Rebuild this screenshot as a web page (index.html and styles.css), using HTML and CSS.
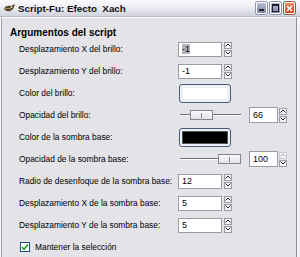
FILE: index.html
```html
<!DOCTYPE html>
<html lang="es">
<head>
    <meta charset="UTF-8">
    <title>Script-Fu: Efecto Xach</title>
    <link rel="stylesheet" href="styles.css">
</head>
<body>
    <div class="window">
        <!-- barra de título -->
        <div class="titlebar">
            <svg class="app-icon" width="13" height="10" viewBox="0 0 13 10">
                <path d="M1 6 C2 3 5 2 8 3 L12 1 L11 4 C10 7 7 9 4 8 C3 8 2 7 1 6 Z" fill="#4d4426"/>
                <path d="M2 6 C4 5 6 5 8 6" stroke="#b5a46a" stroke-width="1" fill="none"/>
                <circle cx="8.5" cy="4.2" r="0.9" fill="#e8e0c0"/>
            </svg>
            <span class="title">Script-Fu: Efecto  Xach</span>
            <div class="win-buttons">
                <span class="win-btn"><i class="glyph-min"></i></span>
                <span class="win-btn"><i class="glyph-max"></i></span>
                <span class="win-btn close">
                    <svg width="7" height="7" viewBox="0 0 7 7"><path d="M1 1 L6 6 M6 1 L1 6" stroke="#fff" stroke-width="1.6"/></svg>
                </span>
            </div>
        </div>

        <div class="client">
            <div class="frame">
                <div class="frame-title">Argumentos del script</div>

                <div class="args">
                    <label>Desplazamiento X del brillo:</label>
                    <div class="spin">
                        <div class="entry"><span class="sel">-1</span></div>
                        <div class="arrows">
                            <span class="arrow"><svg width="6" height="4" viewBox="0 0 6 4"><path d="M0.5 3.5 L3 1 L5.5 3.5" stroke="#222" fill="none"/></svg></span>
                            <span class="arrow"><svg width="6" height="4" viewBox="0 0 6 4"><path d="M0.5 0.5 L3 3 L5.5 0.5" stroke="#222" fill="none"/></svg></span>
                        </div>
                    </div>

                    <label>Desplazamiento Y del brillo:</label>
                    <div class="spin">
                        <div class="entry">-1</div>
                        <div class="arrows">
                            <span class="arrow"><svg width="6" height="4" viewBox="0 0 6 4"><path d="M0.5 3.5 L3 1 L5.5 3.5" stroke="#222" fill="none"/></svg></span>
                            <span class="arrow"><svg width="6" height="4" viewBox="0 0 6 4"><path d="M0.5 0.5 L3 3 L5.5 0.5" stroke="#222" fill="none"/></svg></span>
                        </div>
                    </div>

                    <label>Color del brillo:</label>
                    <div class="color-btn"><div class="swatch white"></div></div>

                    <label>Opacidad del brillo:</label>
                    <div class="scale-row">
                        <div class="scale">
                            <div class="track"></div>
                            <div class="thumb" style="left: 10px"></div>
                        </div>
                        <div class="spin">
                            <div class="entry small">66</div>
                            <div class="arrows">
                                <span class="arrow"><svg width="6" height="4" viewBox="0 0 6 4"><path d="M0.5 3.5 L3 1 L5.5 3.5" stroke="#222" fill="none"/></svg></span>
                                <span class="arrow"><svg width="6" height="4" viewBox="0 0 6 4"><path d="M0.5 0.5 L3 3 L5.5 0.5" stroke="#222" fill="none"/></svg></span>
                            </div>
                        </div>
                    </div>

                    <label>Color de la sombra base:</label>
                    <div class="color-btn"><div class="swatch black"></div></div>

                    <label>Opacidad de la sombra base:</label>
                    <div class="scale-row">
                        <div class="scale">
                            <div class="track"></div>
                            <div class="thumb" style="left: 38px"></div>
                        </div>
                        <div class="spin">
                            <div class="entry small">100</div>
                            <div class="arrows">
                                <span class="arrow off"><svg width="6" height="4" viewBox="0 0 6 4"><path d="M0.5 3.5 L3 1 L5.5 3.5" stroke="#aaa" fill="none"/></svg></span>
                                <span class="arrow"><svg width="6" height="4" viewBox="0 0 6 4"><path d="M0.5 0.5 L3 3 L5.5 0.5" stroke="#222" fill="none"/></svg></span>
                            </div>
                        </div>
                    </div>

                    <label>Radio de desenfoque de la sombra base:</label>
                    <div class="spin">
                        <div class="entry">12</div>
                        <div class="arrows">
                            <span class="arrow"><svg width="6" height="4" viewBox="0 0 6 4"><path d="M0.5 3.5 L3 1 L5.5 3.5" stroke="#222" fill="none"/></svg></span>
                            <span class="arrow"><svg width="6" height="4" viewBox="0 0 6 4"><path d="M0.5 0.5 L3 3 L5.5 0.5" stroke="#222" fill="none"/></svg></span>
                        </div>
                    </div>

                    <label>Desplazamiento X de la sombra base:</label>
                    <div class="spin">
                        <div class="entry">5</div>
                        <div class="arrows">
                            <span class="arrow"><svg width="6" height="4" viewBox="0 0 6 4"><path d="M0.5 3.5 L3 1 L5.5 3.5" stroke="#222" fill="none"/></svg></span>
                            <span class="arrow"><svg width="6" height="4" viewBox="0 0 6 4"><path d="M0.5 0.5 L3 3 L5.5 0.5" stroke="#222" fill="none"/></svg></span>
                        </div>
                    </div>

                    <label>Desplazamiento Y de la sombra base:</label>
                    <div class="spin">
                        <div class="entry">5</div>
                        <div class="arrows">
                            <span class="arrow"><svg width="6" height="4" viewBox="0 0 6 4"><path d="M0.5 3.5 L3 1 L5.5 3.5" stroke="#222" fill="none"/></svg></span>
                            <span class="arrow"><svg width="6" height="4" viewBox="0 0 6 4"><path d="M0.5 0.5 L3 3 L5.5 0.5" stroke="#222" fill="none"/></svg></span>
                        </div>
                    </div>
                </div>

                <div class="check-row">
                    <span class="checkbox">
                        <svg width="8" height="8" viewBox="0 0 8 8"><path d="M1 4 L3 6.2 L7 1.5" stroke="#21a121" stroke-width="1.6" fill="none"/></svg>
                    </span>
                    <span>Mantener la selección</span>
                </div>
            </div>
        </div>
    </div>
</body>
</html>
```

FILE: styles.css
```css
body {
    margin: 0;
    background: #e4e3e8;
    font-family: "Liberation Sans", Arial, sans-serif;
    font-size: 8.4px;
    color: #000;
}

.window {
    width: 300px;
    height: 257px;
    overflow: hidden;
}

/* barra de título estilo XP plateado */
.titlebar {
    height: 17px;
    display: flex;
    align-items: center;
    padding: 0 5px 0 3px;
    background: linear-gradient(#fbfbfd, #e6e6ee 60%, #d2d2dc);
    border-bottom: 1px solid #b9b9c4;
    box-sizing: border-box;
}

.app-icon {
    margin-right: 2px;
}

.title {
    font-weight: bold;
    font-size: 9.8px;
    white-space: pre;
    color: #111;
}

.win-buttons {
    margin-left: auto;
    display: flex;
    gap: 3px;
}

.win-btn {
    width: 11px;
    height: 12px;
    box-sizing: border-box;
    border: 1px solid #fff;
    border-radius: 2px;
    background: linear-gradient(#b8bfd6, #7d86a6);
    box-shadow: 0 0 0 1px #8e94ad;
    display: flex;
    align-items: center;
    justify-content: center;
}

.win-btn.close {
    background: linear-gradient(#f08a6e, #d63c1c);
    box-shadow: 0 0 0 1px #b44a3a;
}

.glyph-min {
    width: 5px;
    height: 2px;
    margin-top: 4px;
    background: #1e1e28;
}

.glyph-max {
    width: 5px;
    height: 5px;
    border: 1px solid #1e1e28;
    border-top-width: 2px;
}

.client {
    height: 240px;
    border-left: 1px solid #f7f7f9;
    border-right: 3px solid #f4f4f7;
    box-sizing: border-box;
}

.frame {
    height: 100%;
    border-left: 1px solid #a2a1ab;
    border-right: 1px solid #8f8e99;
    border-top: 1px solid #fdfdfe;
    padding-top: 10px;
    box-sizing: border-box;
}

.frame-title {
    font-weight: bold;
    font-size: 10px;
    line-height: 10px;
    padding-left: 8px;
}

.args {
    display: grid;
    grid-template-columns: 159px 1fr;
    grid-auto-rows: 22px;
    align-items: center;
    padding-left: 17px;
}

.args label {
    white-space: nowrap;
}

.spin {
    display: flex;
    align-items: center;
    gap: 2px;
}

.entry {
    width: 44px;
    height: 15px;
    box-sizing: border-box;
    border: 1px solid #9c9ba5;
    background: #fff;
    padding-left: 3px;
    font-size: 9px;
    line-height: 13px;
}

.entry.small {
    width: 29px;
    height: 16px;
    line-height: 14px;
}

.sel {
    background: #b6b5bd;
}

.arrows {
    display: flex;
    flex-direction: column;
    gap: 1px;
}

.arrow {
    width: 8px;
    height: 7px;
    box-sizing: border-box;
    border: 1px solid #9d9ca6;
    background: #f4f4f6;
    display: flex;
    align-items: center;
    justify-content: center;
}

.arrow.off {
    border-color: #c9c8d0;
}

.color-btn {
    width: 52px;
    height: 19px;
    margin-left: 1px;
    box-sizing: border-box;
    border: 1px solid #4a5b7a;
    border-radius: 3px;
    padding: 2px;
    background: #eef0f6;
}

.swatch {
    height: 100%;
    box-sizing: border-box;
}

.swatch.white {
    background: #fff;
    border: 1px solid #f0f0f4;
}

.swatch.black {
    background: #000;
    border: 1px solid #555;
}

.scale-row {
    display: flex;
    align-items: center;
    gap: 8px;
    padding-left: 2px;
}

.scale-row .spin {
    gap: 1px;
}

.scale {
    position: relative;
    width: 61px;
    height: 10px;
}

.track {
    margin-top: 4px;
    height: 1px;
    background: #6f6e78;
    border-bottom: 1px solid #fff;
}

.thumb {
    position: absolute;
    top: 0;
    width: 23px;
    height: 10px;
    box-sizing: border-box;
    border: 1px solid #85848e;
    background: linear-gradient(#fbfbfc, #e2e1e7);
}

.thumb::after {
    content: "";
    position: absolute;
    left: 10px;
    top: 2px;
    width: 1px;
    height: 5px;
    background: #85848e;
}

.check-row {
    display: flex;
    align-items: center;
    gap: 5px;
    height: 22px;
    padding-left: 18px;
}

.checkbox {
    width: 10px;
    height: 10px;
    box-sizing: border-box;
    border: 1px solid #1d5180;
    background: #fff;
    display: flex;
    align-items: center;
    justify-content: center;
}
```
